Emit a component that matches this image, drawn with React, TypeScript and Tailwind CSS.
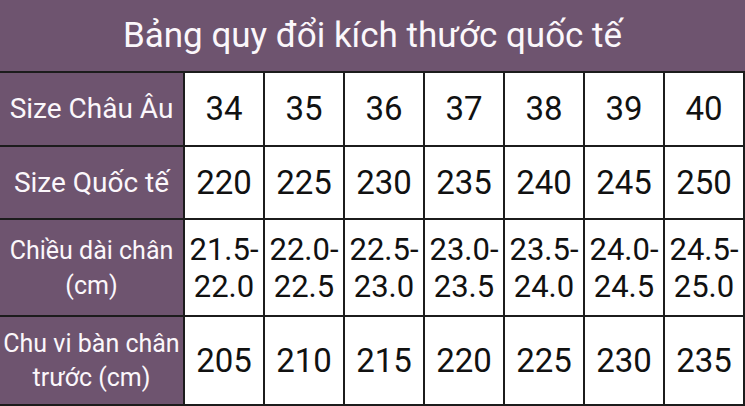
import React from "react";

type Row = { label: string[]; values: string[][]; h: string; lab: string; num: string };

const rows: Row[] = [
  {
    label: ["Size Châu Âu"],
    values: ["34", "35", "36", "37", "38", "39", "40"].map((v) => [v]),
    h: "h-[74px]",
    lab: "text-[28px] leading-[34px]",
    num: "text-[33px] leading-[38px]",
  },
  {
    label: ["Size Quốc tế"],
    values: ["220", "225", "230", "235", "240", "245", "250"].map((v) => [v]),
    h: "h-[73px]",
    lab: "text-[28px] leading-[34px]",
    num: "text-[33px] leading-[38px]",
  },
  {
    label: ["Chiều dài chân", "(cm)"],
    values: [
      ["21.5-", "22.0"],
      ["22.0-", "22.5"],
      ["22.5-", "23.0"],
      ["23.0-", "23.5"],
      ["23.5-", "24.0"],
      ["24.0-", "24.5"],
      ["24.5-", "25.0"],
    ],
    h: "h-[97px]",
    lab: "text-[25px] leading-[35px]",
    num: "text-[31px] leading-[37px]",
  },
  {
    label: ["Chu vi bàn chân", "trước (cm)"],
    values: ["205", "210", "215", "220", "225", "230", "235"].map((v) => [v]),
    h: "h-[89px]",
    lab: "text-[25px] leading-[34px]",
    num: "text-[33px] leading-[38px]",
  },
];

export default function App() {
  return (
    <div
      className="w-[745px] h-[406px] bg-white overflow-hidden"
      style={{ fontFamily: "Roboto, 'Noto Sans', sans-serif" }}
    >
      <div className="h-[73px] bg-[#6e546f] border-b-2 border-[#1c1c1c] flex items-center justify-center">
        <span className="text-[35px] leading-none text-[#fbf7fb] pb-[1px]">
          Bảng quy đổi kích thước quốc tế
        </span>
      </div>
      {rows.map((r, i) => (
        <div key={i} className={`flex ${r.h}`}>
          <div
            className={`w-[185px] shrink-0 bg-[#6e546f] border-r-2 border-b-2 border-[#1c1c1c] flex flex-col items-center justify-center text-[#fbf7fb] ${r.lab}`}
          >
            {r.label.map((l, k) => (
              <span key={k} className="whitespace-nowrap">
                {l}
              </span>
            ))}
          </div>
          {r.values.map((v, j) => (
            <div
              key={j}
              className={`w-[80px] shrink-0 border-r-2 border-b-2 border-[#1c1c1c] flex flex-col items-center justify-center text-[#111] ${r.num}`}
            >
              {v.map((t, k) => (
                <span key={k} className="whitespace-nowrap">
                  {t}
                </span>
              ))}
            </div>
          ))}
        </div>
      ))}
    </div>
  );
}
